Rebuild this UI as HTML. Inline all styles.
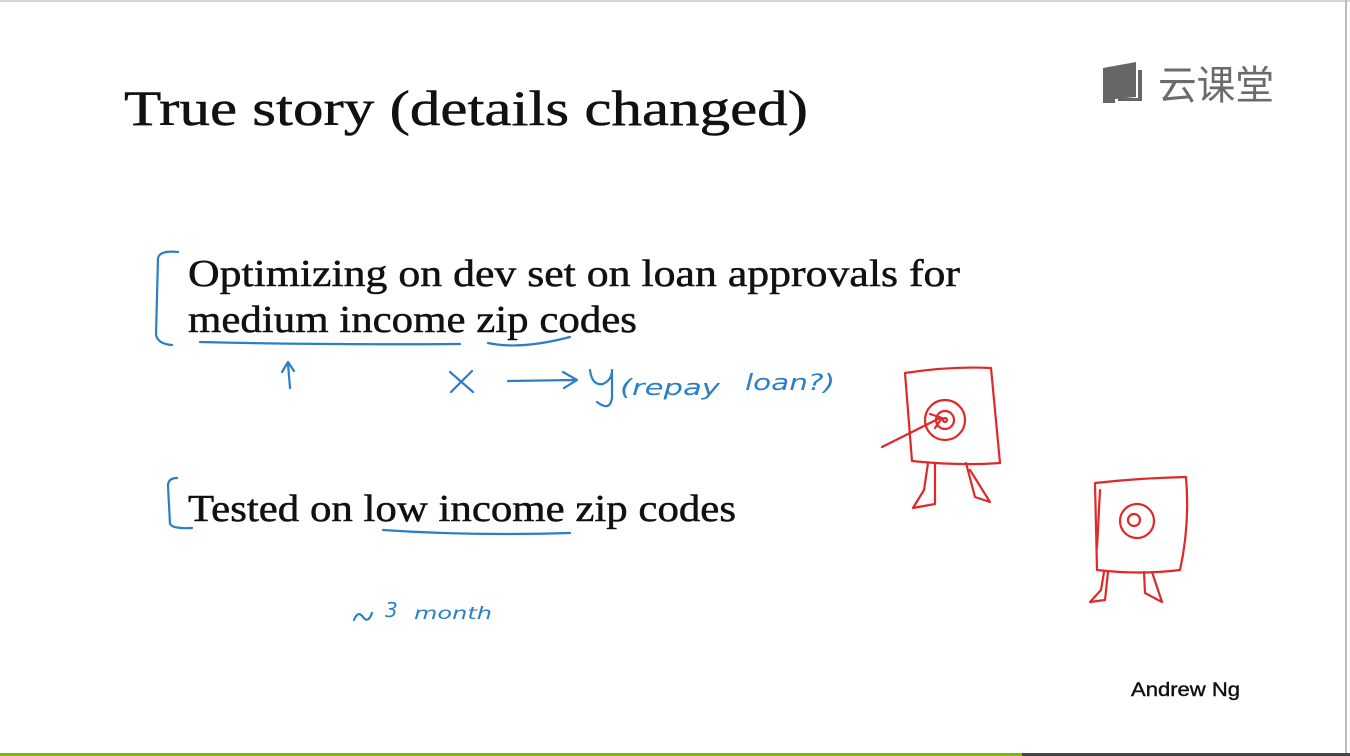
<!DOCTYPE html>
<html><head><meta charset="utf-8"><style>
html,body{margin:0;padding:0;background:#fff;width:1350px;height:756px;overflow:hidden}
svg{display:block}
</style></head><body>
<svg width="1350" height="756" viewBox="0 0 1350 756" xmlns="http://www.w3.org/2000/svg">
<rect width="1350" height="756" fill="#fff"/>
<rect x="0" y="0" width="1350" height="2" fill="#d8d8d8"/>
<rect x="1345" y="0" width="2" height="756" fill="#bdbdbd"/>
<rect x="0" y="753" width="1022" height="3" fill="#7cb800"/>
<rect x="1022" y="753" width="328" height="3" fill="#454548"/>

<!-- logo -->
<g fill="#666">
<path d="M1103 68 L1136 62 L1136 97 L1115 99 L1115 103 L1103 103 Z"/>
<path d="M1138 70 L1142 70 L1142 101 L1118 101 L1118 98 L1138 98 Z"/>
</g>
<text x="1158" y="99" font-family="'Noto Sans CJK SC',sans-serif" font-size="40" fill="#6b6b6b" textLength="116" lengthAdjust="spacingAndGlyphs">云课堂</text>

<g font-family="'Liberation Serif',serif" fill="#111" stroke="#111" stroke-width="0.5">
<text x="124" y="125" font-size="50" textLength="684" lengthAdjust="spacingAndGlyphs">True story (details changed)</text>
<text x="188" y="286" font-size="38" textLength="772" lengthAdjust="spacingAndGlyphs">Optimizing on dev set on loan approvals for</text>
<text x="188" y="332" font-size="38" textLength="449" lengthAdjust="spacingAndGlyphs">medium income zip codes</text>
<text x="188" y="521" font-size="38" textLength="548" lengthAdjust="spacingAndGlyphs">Tested on low income zip codes</text>
</g>
<text x="1131" y="696" font-family="'Liberation Sans',sans-serif" font-size="19" fill="#111" stroke="#111" stroke-width="0.4" textLength="109" lengthAdjust="spacingAndGlyphs">Andrew Ng</text>

<!-- blue handwriting -->
<g fill="none" stroke="#2a7fc7" stroke-width="2.2" stroke-linecap="round" stroke-linejoin="round">
<path d="M178 252 Q160 250 158 258 L156 335 Q158 344 172 345"/>
<path d="M200 342 Q320 345 460 344"/>
<path d="M488 343 Q520 350 570 337"/>
<path d="M290 388 L288 364 M282 372 L288 362 L294 371"/>
<path d="M450 372 L473 392 M472 371 L451 392"/>
<path d="M508 381 L575 380 M563 372 L577 380 L564 388"/>
<path d="M590 370 Q592 386 603 384 Q612 380 612 370 L612 398 Q610 412 597 402"/>
<path d="M177 478 Q168 478 168 486 L170 524 Q173 529 192 528"/>
<path d="M383 530 Q470 536 570 533"/>
<path d="M354 620 Q358 610 363 617 Q368 624 372 613"/>
</g>
<g font-family="'DejaVu Sans',sans-serif" fill="#2a7fc7" font-style="italic">
<text x="620" y="395" font-size="22" textLength="100" lengthAdjust="spacingAndGlyphs">(repay</text>
<text x="745" y="390" font-size="22" textLength="90" lengthAdjust="spacingAndGlyphs">loan?)</text>
<text x="385" y="617" font-size="20">3</text>
<text x="414" y="619" font-size="17" textLength="78" lengthAdjust="spacingAndGlyphs">month</text>
</g>

<!-- red drawings -->
<g fill="none" stroke="#e0282a" stroke-width="2.2" stroke-linecap="round" stroke-linejoin="round">
<path d="M905 373 Q950 366 991 368 L1000 463 Q960 466 912 461 Z"/>
<circle cx="945" cy="420" r="20"/>
<circle cx="945" cy="420" r="9"/>
<circle cx="945" cy="420" r="2"/>
<path d="M882 447 L940 418 M930 414 L942 418 L935 428"/>
<path d="M928 463 L924 490 L913 508 L935 504 L935 463"/>
<path d="M966 463 L975 497 L990 502 L970 470"/>
<path d="M1095 483 Q1140 478 1186 477 Q1190 525 1180 570 Q1140 575 1097 570 Z"/>
<path d="M1100 490 L1097 548"/>
<circle cx="1137" cy="521" r="17"/>
<circle cx="1134" cy="520" r="6"/>
<path d="M1104 572 L1101 590 L1090 602 L1105 600 L1108 572"/>
<path d="M1144 572 L1145 593 L1162 602 L1152 572"/>
</g>
</svg>
</body></html>
